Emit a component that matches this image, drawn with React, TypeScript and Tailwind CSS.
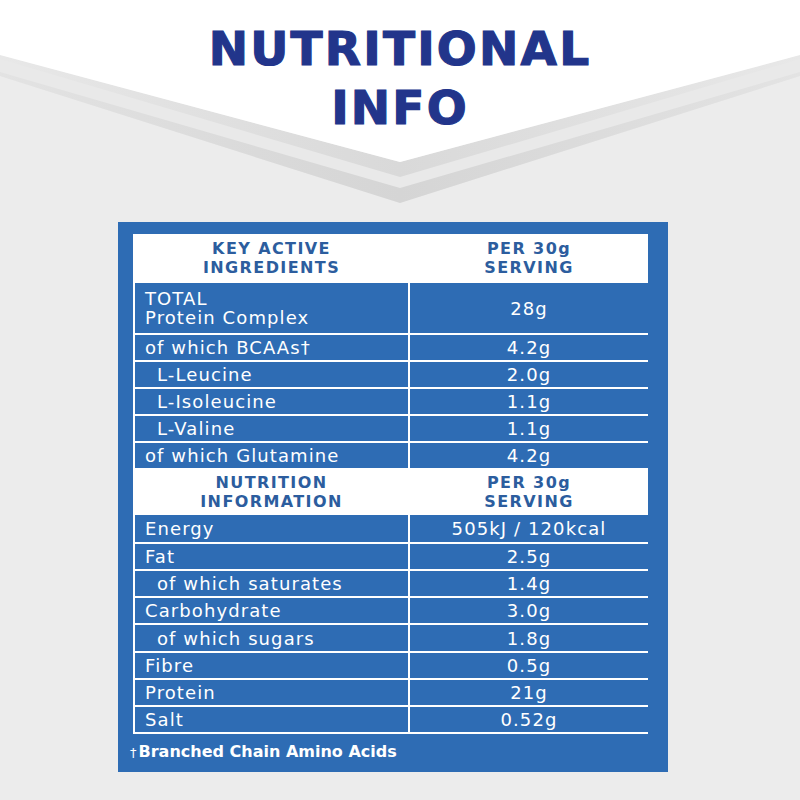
import React from "react"

const FONT = { fontFamily: '"DejaVu Sans", "Liberation Sans", sans-serif' }

type Row = { label: string; value: string; indent?: boolean; h?: string }

const ACTIVE: Row[] = [
  { label: "TOTAL\nProtein Complex", value: "28g", h: "h-[50px]" },
  { label: "of which BCAAs†", value: "4.2g" },
  { label: "L-Leucine", value: "2.0g", indent: true },
  { label: "L-Isoleucine", value: "1.1g", indent: true },
  { label: "L-Valine", value: "1.1g", indent: true },
  { label: "of which Glutamine", value: "4.2g" },
]

const NUTRITION: Row[] = [
  { label: "Energy", value: "505kJ / 120kcal", h: "h-[27px]" },
  { label: "Fat", value: "2.5g" },
  { label: "of which saturates", value: "1.4g", indent: true },
  { label: "Carbohydrate", value: "3.0g" },
  { label: "of which sugars", value: "1.8g", indent: true, h: "h-[26px]" },
  { label: "Fibre", value: "0.5g" },
  { label: "Protein", value: "21g" },
  { label: "Salt", value: "0.52g" },
]

function Backdrop() {
  return (
    <svg className="absolute inset-0" width="800" height="800" viewBox="0 0 800 800">
      <defs>
        <linearGradient id="b1" x1="0" x2="1" y1="0" y2="0">
          <stop offset="0" stopColor="#e8e8e8" />
          <stop offset="0.5" stopColor="#d9d9d9" />
          <stop offset="1" stopColor="#e8e8e8" />
        </linearGradient>
        <linearGradient id="b2" x1="0" x2="1" y1="0" y2="0">
          <stop offset="0" stopColor="#e3e3e3" />
          <stop offset="0.5" stopColor="#d5d5d5" />
          <stop offset="1" stopColor="#e3e3e3" />
        </linearGradient>
      </defs>
      <rect width="800" height="800" fill="#ececec" />
      <polygon points="0,55 400,162 800,55 800,76 400,203 0,76" fill="#e9e9e9" />
      <polygon points="0,55 400,162 800,55 800,59 400,177 0,59" fill="url(#b1)" />
      <polygon points="0,72 400,188 800,72 800,76 400,203 0,76" fill="url(#b2)" />
      <polygon points="0,0 800,0 800,55 400,162 0,55" fill="#ffffff" />
    </svg>
  )
}

function Header({ left, right, h }: { left: string[]; right: string[]; h: string }) {
  return (
    <div className={`grid grid-cols-[273px_238px] gap-[2px] bg-white ${h}`}>
      {[left, right].map((lines, i) => (
        <div
          key={i}
          className="flex flex-col items-center justify-center text-[16px] leading-[19px] font-semibold tracking-[1.4px] text-[#2c5d9e]"
        >
          {lines.map((l) => (
            <span key={l}>{l}</span>
          ))}
        </div>
      ))}
    </div>
  )
}

function DataRow({ row }: { row: Row }) {
  const h = row.h ?? "h-[25px]"
  return (
    <div className="grid grid-cols-[273px_238px] gap-[2px] text-white text-[18px] tracking-[1.1px]">
      <div
        className={`${h} bg-[#2e6cb4] flex flex-col justify-center leading-[19px] ${
          row.indent ? "pl-[22px]" : "pl-[10px]"
        }`}
      >
        {row.label.split("\n").map((l) => (
          <span key={l}>{l}</span>
        ))}
      </div>
      <div className={`${h} bg-[#2e6cb4] flex items-center justify-center`}>{row.value}</div>
    </div>
  )
}

export default function App() {
  return (
    <div className="relative w-[800px] h-[800px] overflow-hidden bg-[#ececec]" style={FONT}>
      <Backdrop />
      <div className="relative flex flex-col items-center">
        <h1 className="mt-[19px] text-center text-[47px] leading-[59px] font-bold tracking-[2.2px] text-[#22358b] [-webkit-text-stroke:1.2px_#22358b]">
          NUTRITIONAL
          <br />
          INFO
        </h1>
        <div className="self-start mt-[85px] ml-[118px] w-[550px] h-[550px] bg-[#2e6cb4] pt-[12px] pl-[15px]">
          <div className="w-[515px] bg-white flex flex-col gap-[2px] px-[2px] pb-[2px]">
            <Header left={["KEY ACTIVE", "INGREDIENTS"]} right={["PER 30g", "SERVING"]} h="h-[47px]" />
            {ACTIVE.map((r) => (
              <DataRow key={r.label} row={r} />
            ))}
            <Header left={["NUTRITION", "INFORMATION"]} right={["PER 30g", "SERVING"]} h="h-[43px]" />
            {NUTRITION.map((r) => (
              <DataRow key={r.label} row={r} />
            ))}
          </div>
          <div className="mt-[6px] ml-[-3px] text-white text-[16px] font-semibold">
            <span className="text-[13px] font-normal mr-[2px]">†</span>Branched Chain Amino Acids
          </div>
        </div>
      </div>
    </div>
  )
}
